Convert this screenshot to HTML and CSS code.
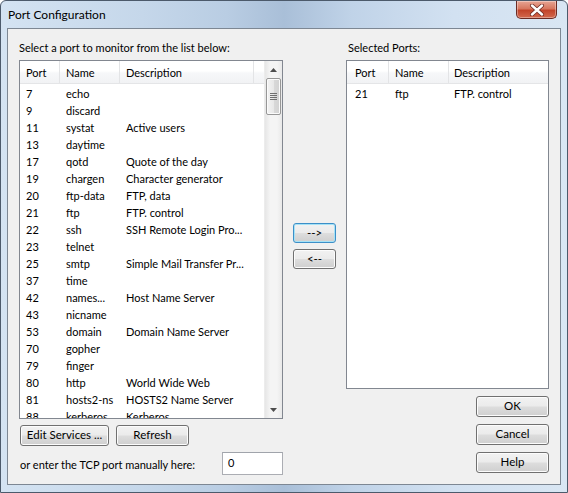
FILE: index.html
```html
<!DOCTYPE html>
<html>
<head>
<meta charset="utf-8">
<link rel="stylesheet" href="styles.css">
</head>
<body>
<div class="window">
  <div class="titlebar">
    <span class="title">Port Configuration</span>
    <div class="close">
      <svg width="16" height="12" viewBox="0 0 16 12"><path d="M3 1.5 L13 10.5 M13 1.5 L3 10.5" stroke="#6d2a22" stroke-width="4" stroke-linecap="round"/><path d="M3 1.5 L13 10.5 M13 1.5 L3 10.5" stroke="#ffffff" stroke-width="2.4" stroke-linecap="round"/></svg>
    </div>
  </div>
  <div class="client">
    <div class="left">
      <div class="label">Select a port to monitor from the list below:</div>
      <div class="list biglist">
        <div class="listbody">
          <div class="header row">
            <span class="c1">Port</span><span class="c2">Name</span><span class="c3">Description</span><span class="c4"></span>
          </div>
          <div class="rows">
            <div class="row"><span class="c1">7</span><span class="c2">echo</span><span class="c3"></span></div>
            <div class="row"><span class="c1">9</span><span class="c2">discard</span><span class="c3"></span></div>
            <div class="row"><span class="c1">11</span><span class="c2">systat</span><span class="c3">Active users</span></div>
            <div class="row"><span class="c1">13</span><span class="c2">daytime</span><span class="c3"></span></div>
            <div class="row"><span class="c1">17</span><span class="c2">qotd</span><span class="c3">Quote of the day</span></div>
            <div class="row"><span class="c1">19</span><span class="c2">chargen</span><span class="c3">Character generator</span></div>
            <div class="row"><span class="c1">20</span><span class="c2">ftp-data</span><span class="c3">FTP, data</span></div>
            <div class="row"><span class="c1">21</span><span class="c2">ftp</span><span class="c3">FTP. control</span></div>
            <div class="row"><span class="c1">22</span><span class="c2">ssh</span><span class="c3">SSH Remote Login Pro...</span></div>
            <div class="row"><span class="c1">23</span><span class="c2">telnet</span><span class="c3"></span></div>
            <div class="row"><span class="c1">25</span><span class="c2">smtp</span><span class="c3">Simple Mail Transfer Pr...</span></div>
            <div class="row"><span class="c1">37</span><span class="c2">time</span><span class="c3"></span></div>
            <div class="row"><span class="c1">42</span><span class="c2">names...</span><span class="c3">Host Name Server</span></div>
            <div class="row"><span class="c1">43</span><span class="c2">nicname</span><span class="c3"></span></div>
            <div class="row"><span class="c1">53</span><span class="c2">domain</span><span class="c3">Domain Name Server</span></div>
            <div class="row"><span class="c1">70</span><span class="c2">gopher</span><span class="c3"></span></div>
            <div class="row"><span class="c1">79</span><span class="c2">finger</span><span class="c3"></span></div>
            <div class="row"><span class="c1">80</span><span class="c2">http</span><span class="c3">World Wide Web</span></div>
            <div class="row"><span class="c1">81</span><span class="c2">hosts2-ns</span><span class="c3">HOSTS2 Name Server</span></div>
            <div class="row"><span class="c1">88</span><span class="c2">kerberos</span><span class="c3">Kerberos</span></div>
          </div>
        </div>
        <div class="scrollbar">
          <div class="arrow up"><svg width="7" height="4" viewBox="0 0 7 4"><path d="M0 4 L3.5 0 L7 4 Z" fill="#4d4d4d"/></svg></div>
          <div class="thumb"><span class="grip"></span><span class="grip"></span><span class="grip"></span><span class="grip"></span></div>
          <div class="track"></div>
          <div class="arrow down"><svg width="7" height="4" viewBox="0 0 7 4"><path d="M0 0 L3.5 4 L7 0 Z" fill="#4d4d4d"/></svg></div>
        </div>
      </div>
      <div class="btnrow">
        <button class="btn edit">Edit Services ...</button>
        <button class="btn refresh">Refresh</button>
      </div>
      <div class="manual">
        <span>or enter the TCP port manually here:</span>
        <div class="input">0</div>
      </div>
    </div>
    <div class="middle">
      <button class="btn arrowbtn default">--&gt;</button>
      <button class="btn arrowbtn">&lt;--</button>
    </div>
    <div class="right">
      <div class="label">Selected Ports:</div>
      <div class="list smalllist">
        <div class="listbody">
          <div class="header row">
            <span class="s1">Port</span><span class="s2">Name</span><span class="s3">Description</span>
          </div>
          <div class="rows">
            <div class="row"><span class="s1">21</span><span class="s2">ftp</span><span class="s3">FTP. control</span></div>
          </div>
        </div>
      </div>
      <div class="dlgbtns">
        <button class="btn dlg">OK</button>
        <button class="btn dlg">Cancel</button>
        <button class="btn dlg">Help</button>
      </div>
    </div>
  </div>
</div>
</body>
</html>
```

FILE: styles.css
```css
html, body {
  margin: 0;
  padding: 0;
  background: #ffffff;
}
body {
  font-family: "Lato", "Noto Sans", sans-serif;
  font-size: 11px;
  color: #000;
}
.window {
  width: 568px;
  height: 493px;
  box-sizing: border-box;
  border: 1px solid #4c5a6b;
  border-radius: 6px 6px 0 0;
  background: linear-gradient(90deg, #d4e3f2 0%, #c5d7ea 25%, #b9cde3 40%, #a9bfd8 50%, #c0d3e8 62%, #d2e1f1 80%, #d9e6f3 100%);
  display: flex;
  flex-direction: column;
  overflow: hidden;
}
.titlebar {
  height: 27px;
  display: flex;
  align-items: flex-start;
  justify-content: space-between;
  padding-left: 7px;
  padding-right: 10px;
}
.title {
  font-size: 12px;
  line-height: 15px;
  margin-top: 6px;
  color: #000;
}
.close {
  width: 41px;
  height: 18px;
  box-sizing: border-box;
  border: 1px solid #6b2b24;
  border-top: none;
  border-radius: 0 0 5px 5px;
  background: linear-gradient(180deg, #e7a594 0%, #d7775f 45%, #c2442a 55%, #d3694e 100%);
  display: flex;
  align-items: center;
  justify-content: center;
  box-shadow: inset 0 0 0 1px rgba(255,255,255,0.35);
}
.client {
  flex: 1;
  margin: 0 6px 7px 6px;
  border: 1px solid #7d8793;
  background: #f0f0f0;
  display: flex;
  padding: 11px 10px 0 11px;
}
.label {
  height: 15px;
  line-height: 15px;
}
.left {
  width: 264px;
  display: flex;
  flex-direction: column;
}
.list {
  box-sizing: border-box;
  border: 1px solid #828790;
  background: #ffffff;
  display: flex;
  overflow: hidden;
}
.biglist {
  margin-top: 5px;
  height: 359px;
}
.listbody {
  flex: 1;
  overflow: hidden;
}
.row {
  display: flex;
  height: 17px;
  line-height: 17px;
  white-space: nowrap;
}
.header {
  height: 22px;
  line-height: 24px;
  background: linear-gradient(180deg, #ffffff 0%, #ffffff 45%, #f6f7f9 55%, #f1f2f4 100%);
  border-bottom: 1px solid #e4e5e7;
  margin-bottom: 1px;
}
.header span {
  border-right: 1px solid #e3e4e6;
  box-sizing: border-box;
  height: 22px;
}
.rows .row span { overflow: hidden; }
.c1 { width: 40px; padding-left: 6px; box-sizing: border-box; }
.c2 { width: 60px; padding-left: 6px; box-sizing: border-box; }
.c3 { width: 134px; padding-left: 6px; box-sizing: border-box; }
.c4 { width: 10px; }
.header .c4 { border-right: none; }
.scrollbar {
  width: 17px;
  border-left: 1px solid #ececec;
  background: linear-gradient(90deg, #e6e6e6 0%, #f4f4f4 30%, #f4f4f4 70%, #e9e9e9 100%);
  display: flex;
  flex-direction: column;
  align-items: center;
}
.arrow {
  height: 17px;
  width: 17px;
  display: flex;
  align-items: center;
  justify-content: center;
}
.thumb {
  width: 15px;
  height: 37px;
  box-sizing: border-box;
  border: 1px solid #979797;
  border-radius: 2px;
  background: linear-gradient(90deg, #f3f3f3 0%, #e8e8e8 50%, #d9d9d9 51%, #d2d2d2 100%);
  display: flex;
  flex-direction: column;
  align-items: center;
  justify-content: center;
  gap: 1px;
  box-shadow: inset 0 0 0 1px #fbfbfb;
}
.grip {
  width: 7px;
  height: 1px;
  background: #707070;
}
.track { flex: 1; }
.btnrow {
  display: flex;
  gap: 7px;
  margin-top: 6px;
  padding-left: 1px;
}
.btn {
  font-family: inherit;
  font-size: 11.5px;
  color: #000;
  height: 21px;
  box-sizing: border-box;
  border: 1px solid #707070;
  border-radius: 3px;
  background: linear-gradient(180deg, #f2f2f2 0%, #ebebeb 48%, #dddddd 52%, #cfcfcf 100%);
  box-shadow: inset 0 0 0 1px #fcfcfc;
  padding: 0 0 2px 0;
  line-height: 17px;
  display: flex;
  align-items: center;
  justify-content: center;
}
.edit { width: 89px; }
.refresh { width: 73px; }
.manual {
  display: flex;
  align-items: center;
  justify-content: space-between;
  margin-top: 6px;
  padding-left: 1px;
}
.manual span { line-height: 15px; margin-top: 2px; }
.input {
  width: 61px;
  height: 23px;
  box-sizing: border-box;
  border: 1px solid #abadb3;
  border-top-color: #a0a4ab;
  background: #fff;
  padding: 2px 0 0 5px;
  line-height: 15px;
}
.middle {
  width: 43px;
  margin-left: 10px;
  margin-right: 10px;
  display: flex;
  flex-direction: column;
  gap: 6px;
  padding-top: 183px;
}
.arrowbtn { width: 43px; height: 20px; }
.default {
  border-color: #3c8fc8;
  box-shadow: inset 0 0 0 1px #a6e2f6;
}
.right {
  width: 203px;
  display: flex;
  flex-direction: column;
}
.right .label { padding-left: 2px; }
.smalllist {
  margin-top: 5px;
  height: 329px;
}
.s1 { width: 42px; padding-left: 8px; box-sizing: border-box; }
.s2 { width: 60px; padding-left: 6px; box-sizing: border-box; }
.s3 { width: 99px; padding-left: 5px; box-sizing: border-box; }
.header .s3 { border-right: none; }
.dlgbtns {
  display: flex;
  flex-direction: column;
  align-items: flex-end;
  gap: 7px;
  margin-top: 7px;
}
.dlg { width: 73px; }
```
